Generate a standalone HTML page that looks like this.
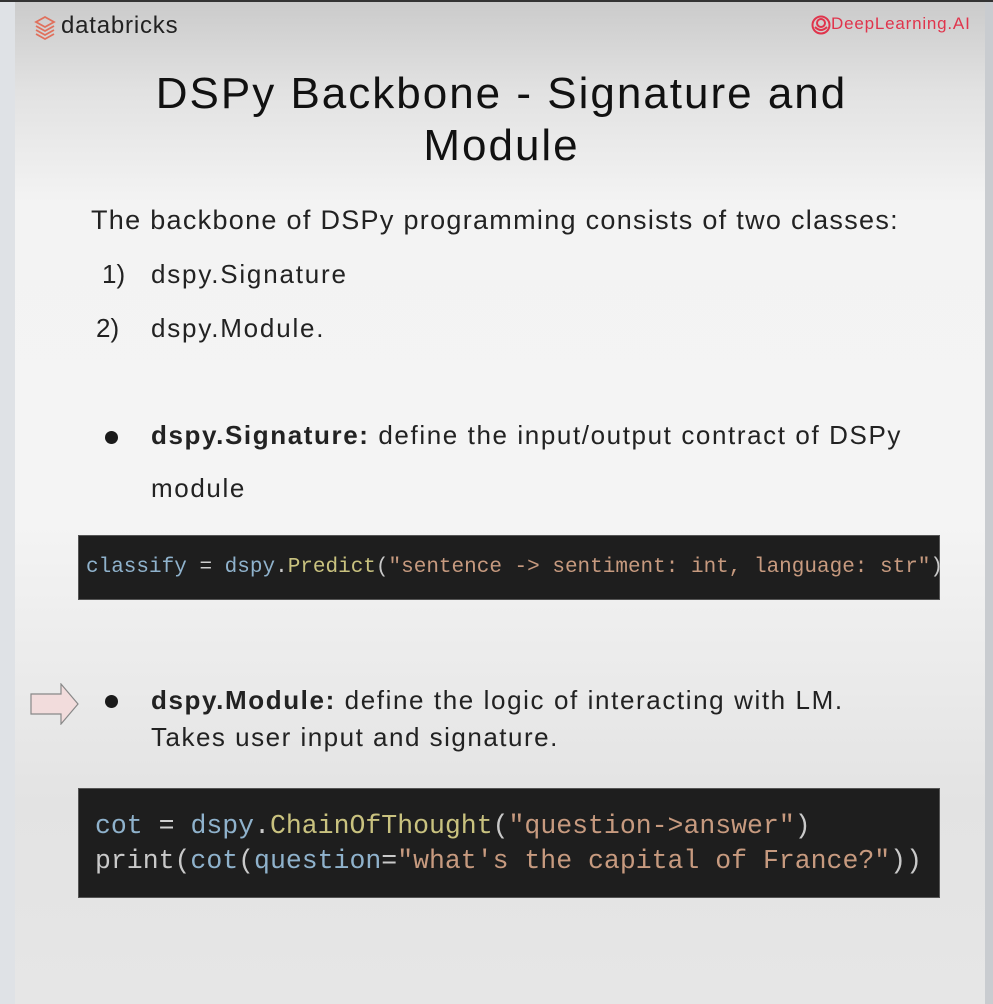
<!DOCTYPE html>
<html><head><meta charset="utf-8"><style>
html,body{margin:0;padding:0}
body{width:993px;height:1004px;position:relative;overflow:hidden;background:#dfe2e6;font-family:"Liberation Sans",sans-serif;color:#1a1a1a}
.topbar{position:absolute;left:0;top:0;width:993px;height:2px;background:#333}
.slide{position:absolute;left:15px;top:2px;width:970px;height:1002px;background:linear-gradient(to bottom,#cbcbcb 0px,#e2e2e2 90px,#f3f3f3 200px,#f4f4f4 520px,#ececec 650px,#e3e3e3 800px,#e6e6e6 1002px)}
.rstrip{position:absolute;left:985px;top:2px;width:8px;height:1002px;background:#c9ccd0}
.abs{position:absolute;white-space:nowrap}
.code{position:absolute;left:78px;width:862px;background:#1e1e1e;border:1px solid #555;box-sizing:border-box;font-family:"Liberation Mono",monospace;color:#c9c9c9}
.b{color:#8fb2cc}.y{color:#c9c27f}.s{color:#c79a7f}.w{color:#cfcfcf}
</style></head><body>
<div class="topbar"></div>
<div class="slide"></div>
<div class="rstrip"></div>

<svg class="abs" style="left:33px;top:15px" width="24" height="26" viewBox="0 0 24 26">
<path d="M12 2 L21 7 L12 12 L3 7 Z" fill="none" stroke="#e0705c" stroke-width="1.8"/>
<path d="M3 11 L12 16 L21 11" fill="none" stroke="#e0705c" stroke-width="1.8"/>
<path d="M3 15 L12 20 L21 15" fill="none" stroke="#e0705c" stroke-width="1.8"/>
<path d="M3 19 L12 24 L21 19" fill="none" stroke="#e0705c" stroke-width="1.8"/>
</svg>
<div class="abs" style="left:61px;top:12px;font-size:24px;color:#222;letter-spacing:0.8px">databricks</div>

<svg class="abs" style="left:811px;top:15px" width="20" height="20" viewBox="0 0 20 20">
<circle cx="10" cy="10" r="8.5" fill="none" stroke="#e0344c" stroke-width="2"/>
<circle cx="10" cy="8" r="4" fill="none" stroke="#e0344c" stroke-width="2"/>
<path d="M4 12 Q10 18 16 12" fill="none" stroke="#e0344c" stroke-width="2"/>
</svg>
<div class="abs" style="left:831px;top:14px;font-size:17px;color:#e0344c;letter-spacing:0.8px">DeepLearning.AI</div>

<div class="abs" style="left:0;width:1003px;text-align:center;top:68px;font-size:44px;line-height:52px;color:#111;letter-spacing:2px">DSPy Backbone - Signature and<br>Module</div>

<div class="abs" style="left:91px;top:205px;font-size:27px;color:#222;letter-spacing:1.3px">The backbone of DSPy programming consists of two classes:</div>
<div class="abs" style="left:102px;top:259px;font-size:26px;color:#222">1)</div>
<div class="abs" style="left:151px;top:259px;font-size:26px;color:#222;letter-spacing:1.8px">dspy.Signature</div>
<div class="abs" style="left:96px;top:313px;font-size:26px;color:#222">2)</div>
<div class="abs" style="left:151px;top:313px;font-size:26px;color:#222;letter-spacing:1.8px">dspy.Module.</div>

<div class="abs" style="left:105px;top:431px;width:13px;height:13px;border-radius:50%;background:#1a1a1a"></div>
<div class="abs" style="left:151px;top:420px;font-size:26px;color:#222;letter-spacing:1.6px"><b>dspy.Signature:</b> define the input/output contract of DSPy</div>
<div class="abs" style="left:151px;top:473px;font-size:26px;color:#222;letter-spacing:1.6px">module</div>

<div class="code" style="top:535px;height:65px;">
<div class="abs" style="left:7px;top:20px;font-size:21px;letter-spacing:0px"><span class="b">classify</span> <span class="w">=</span> <span class="b">dspy</span>.<span class="y">Predict</span>(<span class="s">"sentence -&gt; sentiment: int, language: str"</span>)</div>
</div>

<svg class="abs" style="left:30px;top:683px" width="50" height="42" viewBox="0 0 50 42">
<path d="M1 11 H31 V1 L48 21 L31 41 V31 H1 Z" fill="#f2dcdc" stroke="#888" stroke-width="1.2"/>
</svg>
<div class="abs" style="left:105px;top:695px;width:13px;height:13px;border-radius:50%;background:#1a1a1a"></div>
<div class="abs" style="left:151px;top:685px;font-size:26px;color:#222;letter-spacing:1.6px"><b>dspy.Module:</b> define the logic of interacting with LM.</div>
<div class="abs" style="left:151px;top:722px;font-size:26px;color:#222;letter-spacing:1.5px">Takes user input and signature.</div>

<div class="code" style="top:788px;height:110px;">
<div class="abs" style="left:16px;top:20px;font-size:26.5px;line-height:35px"><span class="b">cot</span> <span class="w">=</span> <span class="b">dspy</span>.<span class="y">ChainOfThought</span>(<span class="s">"question-&gt;answer"</span>)<br>print(<span class="b">cot</span>(<span class="b">question</span>=<span class="s">"what's the capital of France?"</span>))</div>
</div>
</body></html>
